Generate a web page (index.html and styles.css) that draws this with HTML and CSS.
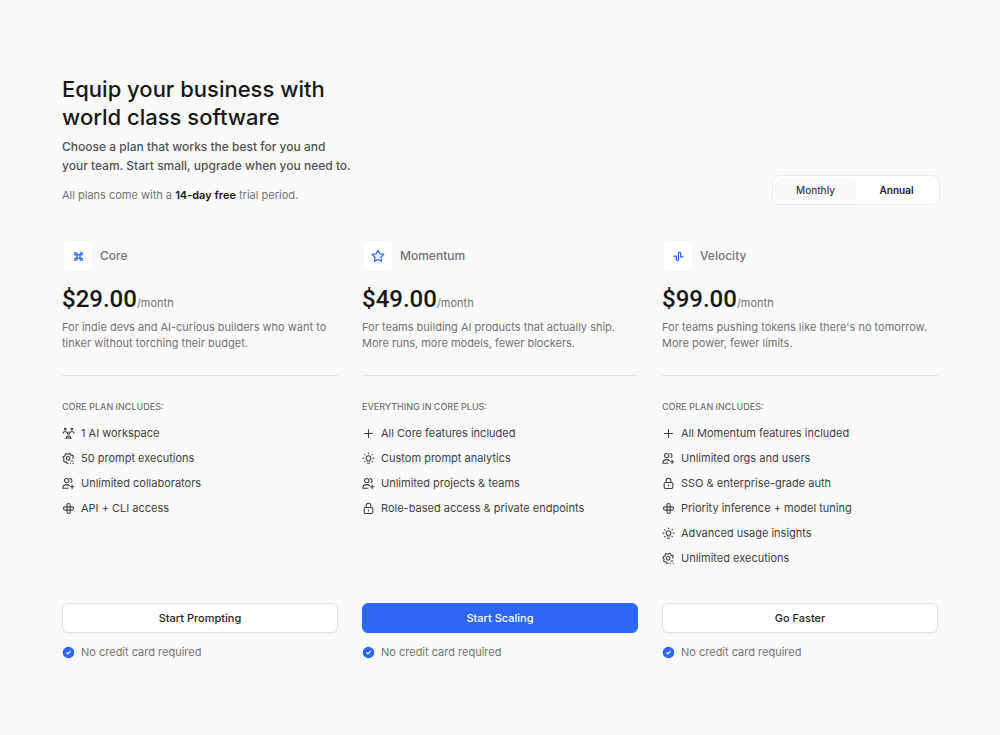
FILE: index.html
```
<!DOCTYPE html>
<html lang="en">
<head>
    <meta charset="UTF-8">
    <meta name="viewport" content="width=device-width, initial-scale=1.0">
    <title>Pricing</title>
    <link rel="stylesheet" href="styles.css">
</head>
<body>

<!-- Shared icons -->
<svg class="icon-defs" aria-hidden="true">
    <symbol id="icon-plus" viewBox="0 0 18 18">
        <path d="M9 3.500v11M3.500 9h11"/>
    </symbol>
    <symbol id="icon-agents" viewBox="0 0 18 18">
        <circle cx="9" cy="8.500" r="1.600"/>
        <circle cx="4.500" cy="3" r="1.200"/>
        <circle cx="13.500" cy="3" r="1.200"/>
        <path d="M5.500 16c.3-2.300 1.600-3.500 3.500-3.500s3.200 1.200 3.500 3.500L9 14.800zM1.500 8.500c.3-1.400 1.300-2.200 2.800-2.200.8 0 1.400.2 1.900.7M16.500 8.500c-.3-1.400-1.300-2.200-2.800-2.200-.8 0-1.400.2-1.900.7"/>
    </symbol>
    <symbol id="icon-gear" viewBox="0 0 18 18">
        <path d="M8.500 15.800l-1.700-.2-.6-1.500-1.500-.7-1.500.4-1-1.600.7-1.400-.4-1.700L1.300 8l.6-1.800 1.700-.2 1-1.300-.2-1.600L6 2.200l1.300 1 1.600-.2.900-1.300 1.800.5.3 1.600 1.300.9 1.600-.3 1 1.500-.9 1.400.3 1.600"/>
        <circle cx="8.500" cy="8.800" r="2.500"/>
        <path d="M12 12.500h3M15.500 15.800v.2M11.500 15.800v.2"/>
    </symbol>
    <symbol id="icon-users" viewBox="0 0 18 18">
        <circle cx="6.500" cy="5" r="3"/>
        <path d="M11 2.200a3 3 0 0 1 1.500 5.500M1.200 15.500c0-3.200 2-5 5.300-5 1.700 0 3 .4 3.900 1.300M1.200 15.500h7M14 11v5M11.500 13.500h5"/>
    </symbol>
    <symbol id="icon-api" viewBox="0 0 18 18">
        <path d="M7 11V4.200a2.200 2.200 0 0 1 4.400 0v2.600h2.400a2.200 2.200 0 0 1 0 4.400H11.400v2.600a2.200 2.200 0 0 1-4.400 0v-2.600H4.200a2.200 2.200 0 0 1 0-4.400h5a2.200 2.200 0 0 1 2.200 2.200v2.200H9.200A2.200 2.200 0 0 1 7 9"/>
    </symbol>
    <symbol id="icon-bulb" viewBox="0 0 18 18">
        <path d="M7.500 12.500v-1a3.300 3.300 0 1 1 3 0v1zM7.800 15.500h2.400M9 1.500v1M1.500 8.500h1M15.500 8.500h1M3.700 3.500l.6.6M14.300 3.500l-.6.6M3.700 13.500l.6-.6M14.300 13.500l-.6-.6"/>
    </symbol>
    <symbol id="icon-lock" viewBox="0 0 18 18">
        <rect x="3" y="7.500" width="12" height="8.500" rx="2"/>
        <path d="M5.800 7.500V5a3.200 3.200 0 0 1 6.400 0v2.500M9 11.200v1.200"/>
    </symbol>
    <symbol id="icon-check" viewBox="0 0 18 18">
        <circle class="check-disc" cx="9" cy="9" r="8"/>
        <path class="check-mark" d="M6.500 9.200l1.700 1.700 3.300-3.600"/>
    </symbol>
</svg>

<main class="pricing">
    <header class="pricing-header">
        <div class="intro">
            <h1>Equip your business with<br>world class software</h1>
            <p class="lead">Choose a plan that works the best for you and<br>your team. Start small, upgrade when you need to.</p>
            <p class="trial">All plans come with a <strong>14-day free</strong> trial period.</p>
        </div>
        <div class="billing" role="group" aria-label="Billing period">
            <button type="button" class="billing-option" aria-pressed="false">Monthly</button>
            <button type="button" class="billing-option active" aria-pressed="true">Annual</button>
        </div>
    </header>

    <div class="plans">
        <section class="plan">
            <div class="plan-title">
                <span class="plan-icon">
                    <svg viewBox="0 0 18 18"><path d="M6.500 6.500h5v5h-5zM6.500 6.500H4.500a2 2 0 1 1 2-2zM11.500 6.500v-2a2 2 0 1 1 2 2zM11.500 11.500h2a2 2 0 1 1-2 2zM6.500 11.500v2a2 2 0 1 1-2-2z"/></svg>
                </span>
                <h2>Core</h2>
            </div>
            <p class="price"><span class="amount">$29.00</span><span class="period">/month</span></p>
            <p class="description">For indie devs and AI-curious builders who want to<br>tinker without torching their budget.</p>
            <div class="includes">
                <h3>Core plan includes:</h3>
                <ul>
                    <li><svg><use href="#icon-agents"/></svg>1 AI workspace</li>
                    <li><svg><use href="#icon-gear"/></svg>50 prompt executions</li>
                    <li><svg><use href="#icon-users"/></svg>Unlimited collaborators</li>
                    <li><svg><use href="#icon-api"/></svg>API + CLI access</li>
                </ul>
            </div>
            <button type="button" class="button">Start Prompting</button>
            <p class="note"><svg><use href="#icon-check"/></svg>No credit card required</p>
        </section>

        <section class="plan">
            <div class="plan-title">
                <span class="plan-icon">
                    <svg class="large" viewBox="0 0 18 18"><path d="M9 1.500l2.300 4.700 5.200.8-3.800 3.600.9 5.200L9 13.400l-4.600 2.400.9-5.200L1.500 7l5.200-.8z"/></svg>
                </span>
                <h2>Momentum</h2>
            </div>
            <p class="price"><span class="amount">$49.00</span><span class="period">/month</span></p>
            <p class="description">For teams building AI products that actually ship.<br>More runs, more models, fewer blockers.</p>
            <div class="includes">
                <h3>Everything in Core plus:</h3>
                <ul>
                    <li><svg><use href="#icon-plus"/></svg>All Core features included</li>
                    <li><svg><use href="#icon-bulb"/></svg>Custom prompt analytics</li>
                    <li><svg><use href="#icon-users"/></svg>Unlimited projects &amp; teams</li>
                    <li><svg><use href="#icon-lock"/></svg>Role-based access &amp; private endpoints</li>
                </ul>
            </div>
            <button type="button" class="button primary">Start Scaling</button>
            <p class="note"><svg><use href="#icon-check"/></svg>No credit card required</p>
        </section>

        <section class="plan">
            <div class="plan-title">
                <span class="plan-icon">
                    <svg viewBox="0 0 18 18"><path d="M1.500 8.500h4V14a1.800 1.800 0 0 0 3.500 0V3.500a1.800 1.800 0 0 1 3.500 0v6h4"/></svg>
                </span>
                <h2>Velocity</h2>
            </div>
            <p class="price"><span class="amount">$99.00</span><span class="period">/month</span></p>
            <p class="description">For teams pushing tokens like there's no tomorrow.<br>More power, fewer limits.</p>
            <div class="includes">
                <h3>Core plan includes:</h3>
                <ul>
                    <li><svg><use href="#icon-plus"/></svg>All Momentum features included</li>
                    <li><svg><use href="#icon-users"/></svg>Unlimited orgs and users</li>
                    <li><svg><use href="#icon-lock"/></svg>SSO &amp; enterprise-grade auth</li>
                    <li><svg><use href="#icon-api"/></svg>Priority inference + model tuning</li>
                    <li><svg><use href="#icon-bulb"/></svg>Advanced usage insights</li>
                    <li><svg><use href="#icon-gear"/></svg>Unlimited executions</li>
                </ul>
            </div>
            <button type="button" class="button">Go Faster</button>
            <p class="note"><svg><use href="#icon-check"/></svg>No credit card required</p>
        </section>
    </div>
</main>

</body>
</html>
```
FILE: styles.css
```
* {
    box-sizing: border-box;
}
body {
    margin: 0;
    background-color: #fafafa;
    color: #171717;
    font-family: Inter, "Liberation Sans", sans-serif;
    font-size: 11px;
    line-height: 16px;
}
h1, h2, h3, p, ul {
    margin: 0;
    padding: 0;
    font-weight: 500;
}
button {
    font-family: inherit;
    font-size: 11px;
    line-height: 16px;
    cursor: pointer;
}
svg {
    fill: none;
    stroke: currentColor;
    stroke-width: 1.5;
    stroke-linecap: round;
    stroke-linejoin: round;
    flex: none;
}
.icon-defs {
    display: none;
}
.pricing {
    padding: 75px 62px;
}

/* Header */
.pricing-header {
    display: flex;
    align-items: flex-end;
    justify-content: space-between;
    margin-bottom: 37px;
}
h1 {
    font-size: 22px;
    line-height: 28px;
}
.lead {
    margin-top: 6px;
    color: #525252;
    font-size: 12px;
    line-height: 19px;
}
.trial {
    margin-top: 12px;
    color: #737373;
    font-weight: 400;
}
.trial strong {
    color: #171717;
    font-weight: 600;
}
.billing {
    display: flex;
    width: 168px;
    margin: 0 -2px -2px 0;
    padding: 2px;
    border: 1px solid #ebebeb;
    border-radius: 8px;
    background-color: white;
}
.billing-option {
    flex: 1;
    padding: 4px 0;
    border: none;
    border-radius: 5px;
    background-color: #fafafa;
    color: #404040;
    font-size: 10px;
    font-weight: 500;
}
.billing-option.active {
    background-color: white;
    color: #171717;
    font-weight: 600;
}

/* Plans */
.plans {
    display: grid;
    grid-template-columns: repeat(3, 1fr);
    gap: 24px;
}
.plan {
    display: flex;
    flex-direction: column;
}
.plan-title {
    display: flex;
    align-items: center;
    gap: 6px;
}
.plan-title h2 {
    color: #737373;
    font-size: 12px;
}
.plan-icon {
    display: flex;
    align-items: center;
    justify-content: center;
    width: 32px;
    height: 32px;
    border: 1px solid #f5f5f5;
    border-radius: 8px;
    background-color: white;
    color: #2563eb;
}
.plan-icon svg {
    width: 11px;
    height: 11px;
    stroke-width: 2;
}
.plan-icon svg.large {
    width: 14px;
    height: 14px;
    stroke-width: 1.5;
}
.price {
    display: flex;
    align-items: baseline;
    margin-top: 11px;
    line-height: 32px;
}
.amount {
    font-family: Roboto, "Liberation Sans", sans-serif;
    font-size: 24px;
}
.period {
    color: #737373;
    font-weight: 400;
}
.description {
    padding-bottom: 24px;
    border-bottom: 1px solid #e5e5e5;
    color: #737373;
    font-weight: 400;
}
.includes {
    flex: 1;
    margin: 23px 0 37px;
}
.includes h3 {
    color: #737373;
    font-size: 9px;
    text-transform: uppercase;
}
.includes ul {
    display: flex;
    flex-direction: column;
    gap: 9px;
    margin-top: 10px;
    list-style: none;
}
.includes li,
.note {
    display: flex;
    align-items: center;
    gap: 6px;
    color: #404040;
    font-weight: 400;
}
.includes li svg,
.note svg {
    width: 13px;
    height: 13px;
}
.button {
    padding: 6px 0;
    border: 1px solid #e5e5e5;
    border-radius: 6px;
    background-color: white;
    box-shadow: 0 1px 1px rgba(0, 0, 0, 0.04);
    color: #262626;
    font-weight: 500;
}
.button.primary {
    border-color: #2c67f6;
    background-color: #2c67f6;
    color: white;
}
.note {
    margin-top: 11px;
    color: #737373;
}
.check-disc {
    fill: #2c67f6;
    stroke: none;
}
.check-mark {
    stroke: white;
}
```
